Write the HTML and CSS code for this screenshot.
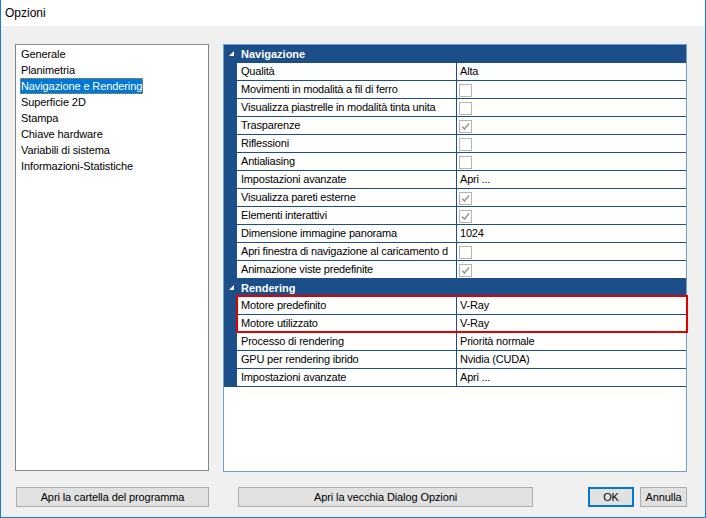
FILE: index.html
```html
<!DOCTYPE html>
<html lang="it">
<head>
<meta charset="utf-8">
<title>Opzioni</title>
<link rel="stylesheet" href="styles.css">
</head>
<body>
<div class="window">
  <div class="titlebar">Opzioni</div>
  <div class="main">
    <div class="panels">
      <ul class="list">
        <li><span>Generale</span></li>
        <li><span>Planimetria</span></li>
        <li><span class="sel">Navigazione e Rendering</span></li>
        <li><span>Superficie 2D</span></li>
        <li><span>Stampa</span></li>
        <li><span>Chiave hardware</span></li>
        <li><span>Variabili di sistema</span></li>
        <li><span>Informazioni-Statistiche</span></li>
      </ul>
      <div class="grid">
        <div class="cat"><svg class="tri" width="5" height="5" viewBox="0 0 5 5"><polygon points="5,0 5,5 0,5" fill="#fff"/></svg>Navigazione</div>
        <div class="row"><div class="name">Qualità</div><div class="val">Alta</div></div>
        <div class="row"><div class="name">Movimenti in modalità a fil di ferro</div><div class="val"><span class="cb"></span></div></div>
        <div class="row"><div class="name">Visualizza piastrelle in modalità tinta unita</div><div class="val"><span class="cb"></span></div></div>
        <div class="row"><div class="name">Trasparenze</div><div class="val"><span class="cb"><svg width="11" height="11" viewBox="0 0 11 11"><polyline points="2,5.5 4.5,8 9,2.5" fill="none" stroke="#9a9a9a" stroke-width="1.6"/></svg></span></div></div>
        <div class="row"><div class="name">Riflessioni</div><div class="val"><span class="cb"></span></div></div>
        <div class="row"><div class="name">Antialiasing</div><div class="val"><span class="cb"></span></div></div>
        <div class="row"><div class="name">Impostazioni avanzate</div><div class="val">Apri ...</div></div>
        <div class="row"><div class="name">Visualizza pareti esterne</div><div class="val"><span class="cb"><svg width="11" height="11" viewBox="0 0 11 11"><polyline points="2,5.5 4.5,8 9,2.5" fill="none" stroke="#9a9a9a" stroke-width="1.6"/></svg></span></div></div>
        <div class="row"><div class="name">Elementi interattivi</div><div class="val"><span class="cb"><svg width="11" height="11" viewBox="0 0 11 11"><polyline points="2,5.5 4.5,8 9,2.5" fill="none" stroke="#9a9a9a" stroke-width="1.6"/></svg></span></div></div>
        <div class="row"><div class="name">Dimensione immagine panorama</div><div class="val">1024</div></div>
        <div class="row"><div class="name">Apri finestra di navigazione al caricamento d</div><div class="val"><span class="cb"></span></div></div>
        <div class="row"><div class="name">Animazione viste predefinite</div><div class="val"><span class="cb"><svg width="11" height="11" viewBox="0 0 11 11"><polyline points="2,5.5 4.5,8 9,2.5" fill="none" stroke="#9a9a9a" stroke-width="1.6"/></svg></span></div></div>
        <div class="cat"><svg class="tri" width="5" height="5" viewBox="0 0 5 5"><polygon points="5,0 5,5 0,5" fill="#fff"/></svg>Rendering</div>
        <div class="marked">
          <div class="row"><div class="name">Motore predefinito</div><div class="val">V-Ray</div></div>
          <div class="row"><div class="name">Motore utilizzato</div><div class="val">V-Ray</div></div>
          <div class="redbox"></div>
        </div>
        <div class="row"><div class="name">Processo di rendering</div><div class="val">Priorità normale</div></div>
        <div class="row"><div class="name">GPU per rendering ibrido</div><div class="val">Nvidia (CUDA)</div></div>
        <div class="row"><div class="name">Impostazioni avanzate</div><div class="val">Apri ...</div></div>
      </div>
    </div>
    <div class="buttons">
      <button class="btn b-folder">Apri la cartella del programma</button>
      <button class="btn b-old">Apri la vecchia Dialog Opzioni</button>
      <button class="btn b-ok">OK</button>
      <button class="btn b-cancel">Annulla</button>
    </div>
  </div>
</div>
</body>
</html>
```

FILE: styles.css
```css
* { box-sizing: border-box; }
html, body { margin: 0; padding: 0; }
body {
  width: 706px;
  height: 518px;
  font-family: "Liberation Sans", Arial, sans-serif;
  color: #000;
  background: #fff;
}
.window {
  width: 706px;
  height: 518px;
  border: 1px solid #1b7ad0;
  border-top: none;
  background: #f0f0f0;
  display: flex;
  flex-direction: column;
}
.titlebar {
  height: 26px;
  background: #fff;
  font-size: 12px;
  line-height: 26px;
  padding-left: 4px;
}
.main {
  flex: 1;
  padding: 18px 18px 0 14px;
  display: flex;
  flex-direction: column;
}
.panels {
  display: flex;
  gap: 14px;
  height: 427px;
}
.list {
  width: 194px;
  height: 427px;
  margin: 0;
  padding: 1px 0 0 4px;
  list-style: none;
  background: #fff;
  border: 1px solid #828790;
  font-size: 11px;
  letter-spacing: -0.1px;
}
.list li {
  height: 16px;
  line-height: 16px;
}
.list li span {
  display: inline-block;
  padding: 0 1px;
  height: 16px;
}
.list li span.sel {
  background: #0078d7;
  color: #fff;
  outline: 1px dotted #d08a2a;
  outline-offset: -1px;
}
.grid {
  width: 464px;
  height: 428px;
  background: #fff;
  border: 1px solid #6f9fd0;
  font-size: 11px;
  letter-spacing: -0.2px;
}
.cat {
  height: 18px;
  background: #1c4e89;
  color: #fff;
  font-weight: bold;
  line-height: 17px;
  padding-left: 5px;
  display: flex;
  align-items: center;
  letter-spacing: 0;
}
.cat .tri {
  margin-right: 7px;
  margin-top: -2px;
}
.row {
  display: flex;
  height: 18px;
  background: #1c4e89;
  padding-left: 13px;
  gap: 1px;
}
.name, .val {
  height: 17px;
  background: #fff;
  line-height: 17px;
  white-space: nowrap;
  overflow: hidden;
}
.name {
  width: 219px;
  padding-left: 4px;
}
.val {
  width: 229px;
  padding-left: 3px;
}
.cb {
  display: block;
  width: 13px;
  height: 13px;
  margin: 3px 0 0 -1px;
  border: 1px solid #b4b4b4;
  background: #fff;
}
.cb svg { display: block; }
.marked { position: relative; }
.redbox {
  position: absolute;
  left: 12px;
  top: -2px;
  width: 452px;
  height: 38px;
  border: 2px solid #e10000;
  pointer-events: none;
}
.buttons {
  display: flex;
  margin-top: 16px;
  padding-left: 1px;
}
.btn {
  height: 20px;
  margin: 0;
  padding: 0;
  font-family: "Liberation Sans", Arial, sans-serif;
  font-size: 11px;
  color: #000;
  background: #e1e1e1;
  border: 1px solid #adadad;
  letter-spacing: -0.1px;
}
.b-folder { width: 193px; }
.b-old { width: 295px; margin-left: 29px; }
.b-ok { width: 46px; margin-left: 55px; border: 2px solid #0078d7; }
.b-cancel { width: 47px; margin-left: 6px; }
```
